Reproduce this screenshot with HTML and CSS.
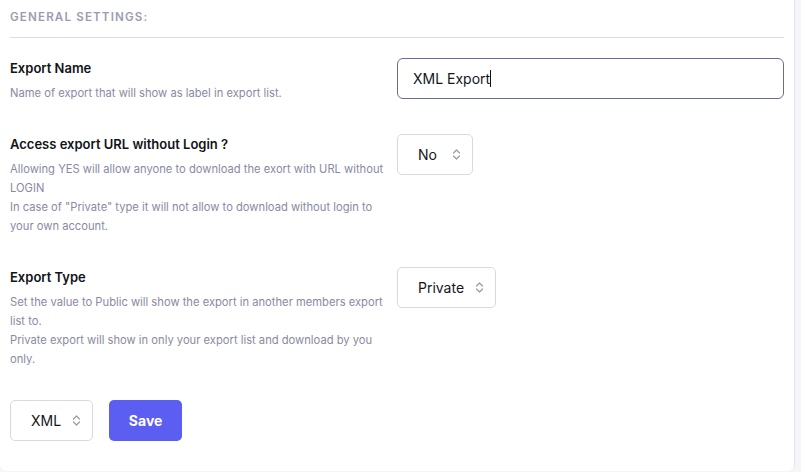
FILE: index.html
```html
<!DOCTYPE html>
<html>
<head>
<meta charset="utf-8">
<link rel="stylesheet" href="styles.css">
</head>
<body>
<div class="card">
  <div class="section-title">GENERAL SETTINGS:</div>
  <div class="divider"></div>
  <div class="rows">
    <div class="row">
      <div class="info">
        <div class="label">Export Name</div>
        <div class="desc">Name of export that will show as label in export list.</div>
      </div>
      <div class="control">
        <div class="input"><span class="value">XML Export</span><span class="caret"></span></div>
      </div>
    </div>
    <div class="row">
      <div class="info">
        <div class="label">Access export URL without Login ?</div>
        <div class="desc">Allowing YES will allow anyone to download the exort with URL without LOGIN<br>In case of "Private" type it will not allow to download without login to your own account.</div>
      </div>
      <div class="control">
        <div class="select select-wide"><span>No</span>
          <svg class="chev" width="9" height="13" viewBox="0 0 9 13"><path d="M1.5 5 L4.5 2 L7.5 5 M1.5 8 L4.5 11 L7.5 8" fill="none" stroke="#9a9aa6" stroke-width="1.2" stroke-linecap="round" stroke-linejoin="round"/></svg>
        </div>
      </div>
    </div>
    <div class="row">
      <div class="info">
        <div class="label">Export Type</div>
        <div class="desc">Set the value to Public will show the export in another members export list to.<br>Private export will show in only your export list and download by you only.</div>
      </div>
      <div class="control">
        <div class="select"><span>Private</span>
          <svg class="chev" width="9" height="13" viewBox="0 0 9 13"><path d="M1.5 5 L4.5 2 L7.5 5 M1.5 8 L4.5 11 L7.5 8" fill="none" stroke="#9a9aa6" stroke-width="1.2" stroke-linecap="round" stroke-linejoin="round"/></svg>
        </div>
      </div>
    </div>
  </div>
  <div class="actions">
    <div class="select"><span>XML</span>
      <svg class="chev" width="9" height="13" viewBox="0 0 9 13"><path d="M1.5 5 L4.5 2 L7.5 5 M1.5 8 L4.5 11 L7.5 8" fill="none" stroke="#9a9aa6" stroke-width="1.2" stroke-linecap="round" stroke-linejoin="round"/></svg>
    </div>
    <div class="btn">Save</div>
  </div>
</div>
</body>
</html>
```
FILE: styles.css
```css
html, body {
  margin: 0;
  padding: 0;
  background: #f5f5fa;
  font-family: Inter, "Noto Sans", sans-serif;
}
.card {
  width: 774px;
  height: 461px;
  background: #fff;
  padding: 10px 10px 0 10px;
  border-right: 1px solid #e6e6ef;
  border-bottom-right-radius: 6px;
  border-bottom-left-radius: 6px;
}
.section-title {
  font-size: 11.6px;
  font-weight: 600;
  letter-spacing: 1.15px;
  color: #9c9cb0;
  line-height: 14px;
}
.divider {
  height: 1px;
  background: #dcdce6;
  margin-top: 13px;
}
.rows {
  display: flex;
  flex-direction: column;
  gap: 31px;
  margin-top: 20px;
}
.row {
  display: grid;
  grid-template-columns: 377px 1fr;
  column-gap: 10px;
}
.label {
  font-size: 13px;
  font-weight: 600;
  color: #111318;
  line-height: 20px;
}
.desc {
  font-size: 11.2px;
  color: #8a8a9f;
  line-height: 19px;
  margin-top: 6px;
}
.input {
  height: 39px;
  border: 1px solid #6a6c99;
  border-radius: 6px;
  display: flex;
  align-items: center;
  padding-left: 15px;
  font-size: 14px;
  color: #15161c;
}
.caret {
  display: inline-block;
  width: 1px;
  height: 17px;
  background: #111;
}
.select {
  display: inline-flex;
  align-items: center;
  height: 39px;
  border: 1px solid #d9d9e1;
  border-radius: 5px;
  padding: 0 11px 0 20px;
  gap: 11px;
  font-size: 14px;
  color: #15161c;
  background: #fff;
}
.select-wide {
  gap: 15px;
}
.chev {
  display: block;
}
.actions {
  display: flex;
  gap: 16px;
  margin-top: 31px;
}
.btn {
  width: 73px;
  height: 41px;
  background: #5b5ef0;
  color: #fff;
  font-size: 14px;
  font-weight: 700;
  border-radius: 5px;
  display: flex;
  align-items: center;
  justify-content: center;
}
```
